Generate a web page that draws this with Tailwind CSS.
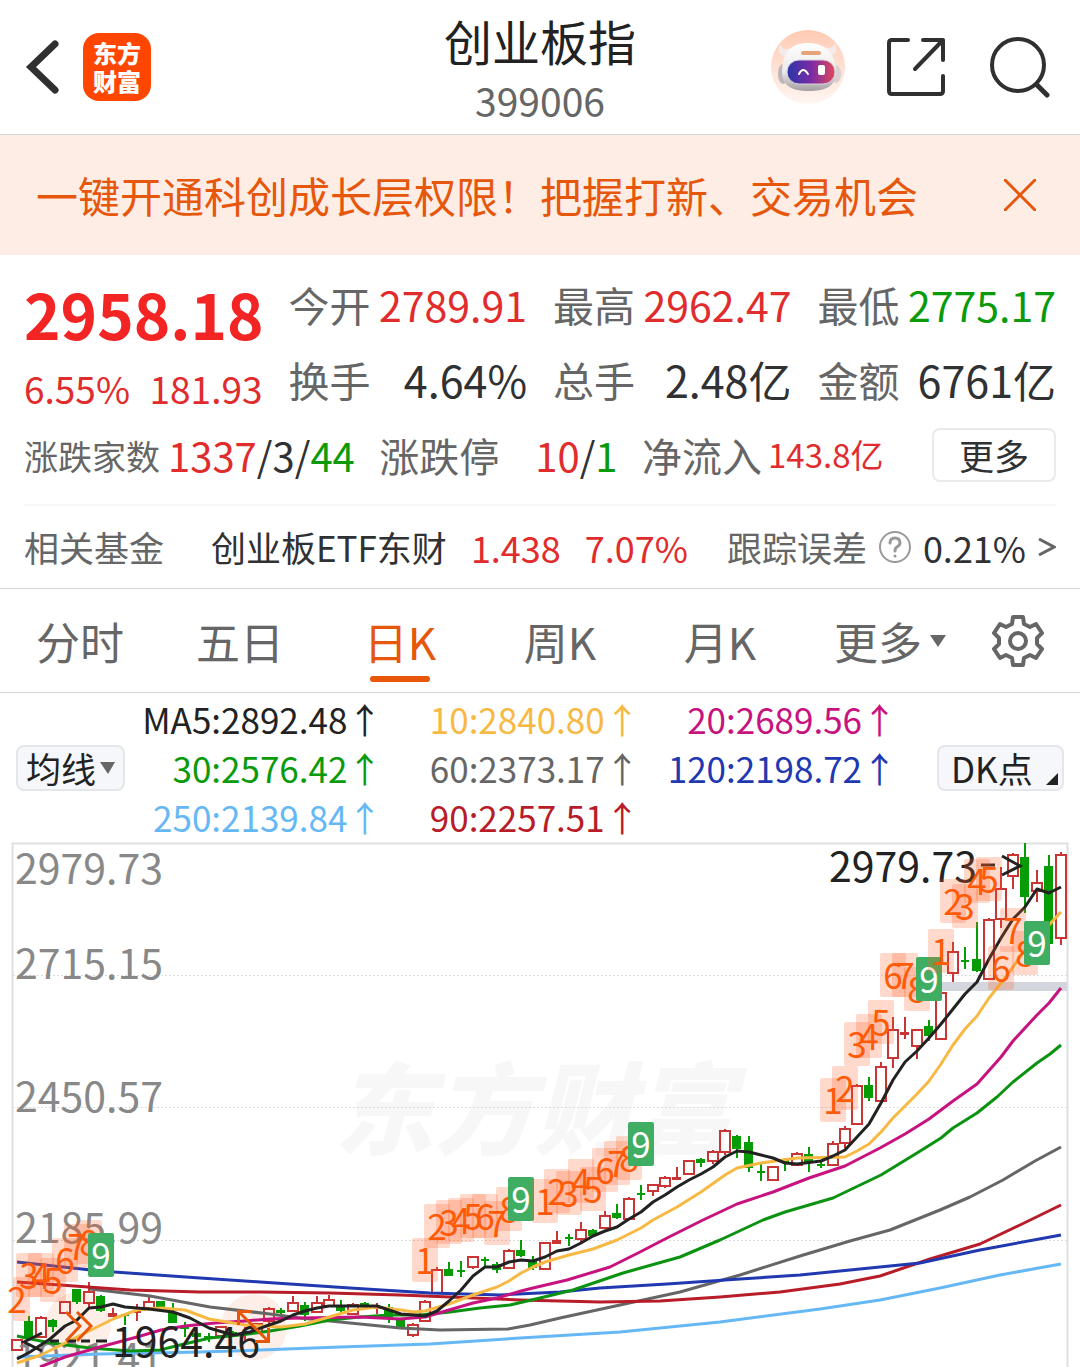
<!DOCTYPE html>
<html lang="zh-CN">
<head>
  <meta charset="UTF-8">
  <meta name="viewport" content="width=device-width, initial-scale=1.0">
  <title>创业板指 399006</title>
  <script src="https://cdn.jsdelivr.net/npm/@tailwindcss/browser@4"></script>
</head>
<body class="bg-white text-[#303133] font-['Noto_Sans_CJK_SC',sans-serif] overflow-x-hidden">

<!-- Header -->
<header class="grid grid-cols-[1fr_auto_1fr] items-center h-[135px] px-6 border-b border-[#d8d8d8]">
  <div class="flex items-center gap-6">
    <button type="button" aria-label="返回">
      <svg class="block w-9 h-14" viewBox="0 0 36 56" fill="none" stroke="#303030" stroke-width="7" stroke-linecap="round" stroke-linejoin="round">
        <path d="M31 5L7 28L31 51" stroke-linejoin="miter"/>
      </svg>
    </button>
    <a href="#" class="flex flex-col items-center justify-center size-17 rounded-2xl bg-[#ff4600] text-white font-black text-2xl leading-7 -ml-px">
      <span>东方</span>
      <span>财富</span>
    </a>
  </div>
  <div class="pt-1 text-center">
    <h1 class="text-[48px] leading-[58px] text-[#222]">创业板指</h1>
    <p class="mt-1 text-[39px] leading-[54px] text-[#666]">399006</p>
  </div>
  <div class="flex items-center justify-end gap-10 pr-[6px]">
    <button type="button" aria-label="智能助手">
      <svg class="block size-[75px]" viewBox="0 0 75 75">
        <defs>
          <linearGradient id="halo" x1="0" y1="0" x2="0" y2="1">
            <stop offset="0" stop-color="#ffcab3"/><stop offset="1" stop-color="#fff6f2"/>
          </linearGradient>
          <linearGradient id="visor" x1="0" y1="0" x2="1" y2="0">
            <stop offset="0" stop-color="#2b35a8"/><stop offset=".5" stop-color="#7a2ba6"/><stop offset="1" stop-color="#e0485c"/>
          </linearGradient>
          <linearGradient id="helmet" x1="0" y1="0" x2="0" y2="1">
            <stop offset="0" stop-color="#fff"/><stop offset=".6" stop-color="#ece8e9"/><stop offset="1" stop-color="#a39da0"/>
          </linearGradient>
        </defs>
        <circle cx="37" cy="37" r="37" fill="url(#halo)"/>
        <path d="M17 27C9 27 6 21 9 14C11 19 15 20 21 18ZM56 26C65 27 67 20 64 13C62 18 58 19 53 17Z" fill="#f3eaea"/>
        <ellipse cx="12" cy="44" rx="5" ry="10" fill="#bdb5b8"/>
        <ellipse cx="65" cy="44" rx="5" ry="9" fill="#d8d0d2"/>
        <path d="M11 42C11 22 20 13 37 13C54 13 65 23 65 43C65 56 54 61 38 61C21 61 11 56 11 42Z" fill="url(#helmet)"/>
        <rect x="30" y="21" width="20" height="4" rx="2" fill="#e5a478"/>
        <rect x="16" y="30" width="48" height="24" rx="12" fill="url(#visor)" stroke="#d8d0dc"/>
        <path d="M28 44Q32 36 37 44" fill="none" stroke="#fff" stroke-width="2" stroke-linecap="round"/>
        <rect x="47" y="35" width="7" height="10" rx="2" fill="#fff"/>
      </svg>
    </button>
    <button type="button" aria-label="分享">
      <svg class="block size-15" viewBox="0 0 60 60" fill="none" stroke="#303030" stroke-width="4" stroke-linecap="round" stroke-linejoin="round">
        <path d="M22 3H6Q3 3 3 6V54Q3 57 6 57H54Q57 57 57 54V39M37 3H57V23M57 3L29 32"/>
      </svg>
    </button>
    <button type="button" aria-label="搜索">
      <svg class="block size-16" viewBox="0 0 64 64" fill="none" stroke="#303030" stroke-width="4" stroke-linecap="round">
        <circle cx="32" cy="30" r="26"/>
        <path d="M51 50L61 60" stroke-width="5"/>
      </svg>
    </button>
  </div>
</header>

<!-- Promo banner -->
<div class="flex items-center justify-between h-30 pl-9 pr-11 bg-[#fdede4] text-[#e6570c]">
  <a href="#" class="text-[42px] leading-[60px]">一键开通科创成长层权限！把握打新、交易机会</a>
  <button type="button" aria-label="关闭">
    <svg class="block size-8" viewBox="0 0 32 32" fill="none" stroke="currentColor" stroke-width="3" stroke-linecap="round">
      <path d="M1 1L31 31M31 1L1 31"/>
    </svg>
  </button>
</div>

<!-- Quote summary -->
<section class="px-6 pt-3 border-b border-[#d8d8d8]">
  <div class="grid grid-cols-4 gap-x-[26px] text-[41px] leading-[75px]">
    <div class="row-span-2 flex flex-col whitespace-nowrap text-[#e02c2c]">
      <strong class="text-[62px] leading-[92px] text-[#f32424]">2958.18</strong>
      <div class="flex justify-between text-[37px] leading-[58px]"><span>6.55%</span><span>181.93</span></div>
    </div>
    <div class="flex justify-between whitespace-nowrap"><span class="text-[#666]">今开</span><span class="text-[#e02c2c]">2789.91</span></div>
    <div class="flex justify-between whitespace-nowrap"><span class="text-[#666]">最高</span><span class="text-[#e02c2c]">2962.47</span></div>
    <div class="flex justify-between whitespace-nowrap"><span class="text-[#666]">最低</span><span class="text-[#0a9a0a]">2775.17</span></div>
    <div class="flex justify-between whitespace-nowrap"><span class="text-[#666]">换手</span><span class="text-[43px]">4.64%</span></div>
    <div class="flex justify-between whitespace-nowrap"><span class="text-[#666]">总手</span><span class="text-[43px]">2.48亿</span></div>
    <div class="flex justify-between whitespace-nowrap"><span class="text-[#666]">金额</span><span class="text-[43px]">6761亿</span></div>
  </div>

  <div class="flex items-center justify-between h-[89px] pb-[11px] whitespace-nowrap border-b-2 border-[#f6f6f6] text-[40px]">
    <div class="flex items-center gap-2">
      <span class="text-[34px] text-[#666]">涨跌家数</span>
      <span><span class="text-[#e02c2c]">1337</span>/3/<span class="text-[#0a9a0a]">44</span></span>
    </div>
    <div class="flex items-center gap-9">
      <span class="text-[#666]">涨跌停</span>
      <span><span class="text-[#e02c2c]">10</span>/<span class="text-[#0a9a0a]">1</span></span>
    </div>
    <div class="flex items-center gap-[6px] mr-6">
      <span class="text-[#666]">净流入</span>
      <span class="text-[33px] text-[#e02c2c]">143.8亿</span>
    </div>
    <button type="button" class="flex items-center justify-center w-[124px] h-[54px] rounded-lg border-2 border-[#e8eaec] text-[35px] leading-[46px]">更多</button>
  </div>

  <div class="flex items-center justify-between h-[82px] whitespace-nowrap text-[35px]">
    <span class="text-[#666]">相关基金</span>
    <a href="#" class="flex items-center gap-6 pl-2">
      <span>创业板ETF东财</span>
      <span class="text-[36px] text-[#e02c2c]">1.438</span>
      <span class="text-[36px] text-[#e02c2c]">7.07%</span>
    </a>
    <a href="#" class="flex items-center gap-3">
      <span class="text-[#666]">跟踪误差</span>
      <svg class="size-8" viewBox="0 0 32 32" fill="none" stroke="#999" stroke-width="3" stroke-linecap="round">
        <circle cx="16" cy="16" r="15" stroke-width="2"/>
        <path d="M11 12Q11 7 16 7Q21 7 21 12Q21 14 18 16Q16 17 16 20"/>
        <path d="M16 25V25"/>
      </svg>
      <span class="text-[36px]">0.21%</span>
      <svg class="w-[18px] h-5" viewBox="0 0 18 20" fill="none" stroke="#666" stroke-width="3"><path d="M1 2L16 10L1 18"/></svg>
    </a>
  </div>
</section>

<!-- Period tabs -->
<nav class="flex items-center h-[104px] border-b border-[#d8d8d8] text-[44px] leading-[60px] text-[#666]">
  <div class="flex-1 grid grid-cols-6 justify-items-center">
    <button type="button">分时</button>
    <button type="button">五日</button>
    <button type="button" class="relative text-[#e6570c]">日K<span class="absolute left-1/2 -translate-x-1/2 -bottom-[11px] w-15 h-[6px] rounded-full bg-[#e8560a]"></span></button>
    <button type="button">周K</button>
    <button type="button">月K</button>
    <button type="button" class="flex items-center gap-2 pl-5">更多<svg class="w-4 h-3" viewBox="0 0 16 12"><path d="M0 0H16L8 12Z" fill="#666"/></svg></button>
  </div>
  <button type="button" aria-label="设置" class="ml-8 mr-9">
    <svg class="block size-[52px]" viewBox="0 0 52 52" fill="none" stroke="#666" stroke-width="4" stroke-linejoin="round">
      <path d="M21 2H31L32 9L38 12L44 9L50 18L45 23V29L50 34L44 43L38 40L32 43L31 50H21L20 43L14 40L8 43L2 34L7 29V23L2 18L8 9L14 12L20 9Z"/>
      <circle cx="26" cy="26" r="8"/>
    </svg>
  </button>
</nav>

<!-- Moving averages -->
<section class="flex items-center justify-between h-[149px] px-4 text-[#222] text-[35px]">
  <button type="button" class="flex items-center justify-center gap-1 w-[109px] h-[46px] rounded-lg border-2 border-[#e4e6e9] bg-[#f6f7fa] leading-[42px]">均线<svg class="w-[15px] h-3" viewBox="0 0 15 12"><path d="M0 0H15L8 12Z" fill="#666"/></svg></button>
  <div class="flex-1 grid grid-cols-3 mr-10 text-right whitespace-nowrap leading-[49px]">
    <span>MA5:2892.48↑</span>
    <span class="text-[#f8b944]">10:2840.80↑</span>
    <span class="text-[#c7137f]">20:2689.56↑</span>
    <span class="text-[#0a9a0a]">30:2576.42↑</span>
    <span class="text-[#666]">60:2373.17↑</span>
    <span class="text-[#2038b0]">120:2198.72↑</span>
    <span class="text-[#66b8f5]">250:2139.84↑</span>
    <span class="text-[#b81c28]">90:2257.51↑</span>
  </div>
  <button type="button" class="flex items-end justify-between w-[127px] h-[46px] pl-3 pr-1 rounded-lg border-2 border-[#e4e6e9] bg-[#f6f7fa] leading-[42px]">DK点<svg class="size-3 mb-1" viewBox="0 0 12 12"><path d="M12 0V12H0Z" fill="#222"/></svg></button>
</section>

<!-- K-line chart -->
<svg id="chart" class="block w-full" viewBox="0 842 1080 525" font-family="'Noto Sans CJK SC', sans-serif">
  <text x="334" y="1147" font-size="100" font-weight="900" fill="#f7f7f7" font-style="italic">东方财富</text>
  <g stroke="#dcdcdc" stroke-dasharray="2 2">
    <path d="M13 975.5H1067M13 1107.5H1067M13 1240.5H1067"/>
  </g>
  <path d="M12.5 1367V843.5H1067.5V1367" fill="none" stroke="#e0e0e0" stroke-width="2"/>
  <rect x="941" y="982" width="126" height="9" fill="#d3d6dc"/>
  <circle cx="78" cy="1325" r="33" fill="#fdeee8"/>
  <circle cx="254" cy="1327" r="33" fill="#fdeee8"/>
  <g id="candles"></g>
  <g font-size="41" fill="#888">
    <text x="15" y="884">2979.73</text>
    <text x="15" y="979">2715.15</text>
    <text x="15" y="1112">2450.57</text>
    <text x="15" y="1243">2185.99</text>
    <text x="15" y="1373">1921.41</text>
  </g>
  <g fill="none" stroke-width="3" stroke-linejoin="round">
    <polyline stroke="#66b8f5" points="17,1357 100,1354 200,1352 260,1350 340,1347 430,1344 520,1338 620,1332 720,1322 820,1309 880,1300 940,1288 1000,1275 1061,1264"/>
    <polyline stroke="#666" points="90,1289 150,1296 210,1307 270,1314 300,1318 350,1323 400,1328 440,1330 508,1329 530,1325 560,1318 620,1305 680,1292 740,1275 800,1256 850,1241 890,1230 940,1210 970,1197 1003,1180 1035,1161 1061,1147"/>
    <polyline stroke="#b81c28" points="17,1282 60,1285 130,1290 200,1292 260,1292 330,1293 400,1295 450,1297 520,1300 600,1302 660,1301 720,1297 780,1292 840,1284 880,1276 930,1259 980,1244 1020,1225 1061,1205"/>
    <polyline stroke="#2038b0" points="17,1262 100,1271 200,1278 260,1282 350,1288 430,1293 500,1295 560,1292 600,1288 667,1284 740,1279 800,1275 860,1269 920,1263 980,1250 1061,1235"/>
    <polyline stroke="#0a9210" points="17,1336 50,1343 90,1348 130,1351 160,1350 180,1345 210,1338 240,1335 270,1331 300,1326 330,1320 360,1317 390,1315 420,1315 450,1312 480,1308 510,1305 540,1298 573,1290 623,1273 680,1257 720,1240 763,1220 785,1212 833,1198 881,1175 917,1153 941,1138 953,1128 977,1113 997,1097 1013,1082 1037,1063 1050,1054 1061,1045"/>
    <polyline stroke="#c7137f" points="40,1367 65,1357 100,1347 137,1337 161,1330 185,1326 215,1323 245,1321 270,1319 300,1318 360,1317 400,1319 425,1317 449,1310 473,1303 497,1298 521,1291 533,1288 567,1280 610,1267 640,1252 667,1238 703,1220 737,1204 773,1192 809,1178 845,1166 880,1148 905,1134 929,1119 953,1101 977,1084 1001,1057 1013,1041 1037,1015 1049,1003 1061,988"/>
    <polyline stroke="#f8b944" points="17,1363 41,1355 65,1343 89,1331 113,1319 137,1310 161,1308 185,1310 209,1319 245,1325 281,1327 305,1324 329,1317 353,1310 377,1307 401,1310 413,1312 425,1311 449,1304 473,1295 497,1287 509,1281 521,1273 533,1267 545,1262 569,1255 593,1249 617,1240 641,1228 653,1220 677,1207 701,1192 725,1175 737,1168 761,1163 797,1158 845,1157 857,1151 869,1144 881,1132 893,1118 917,1094 929,1081 941,1064 953,1045 965,1029 977,1016 989,998 1001,983 1013,967 1025,950 1037,937 1049,925 1061,912"/>
    <polyline stroke="#222" points="17,1359 30,1352 50,1339 65,1326 77,1320 89,1308 101,1307 113,1304 125,1307 149,1309 173,1312 190,1318 209,1328 233,1335 250,1332 269,1325 281,1321 293,1315 305,1311 317,1308 329,1306 377,1306 389,1310 401,1314 425,1316 437,1311 449,1301 461,1290 473,1276 485,1267 497,1267 509,1262 521,1260 533,1261 545,1257 557,1251 569,1249 581,1243 593,1236 605,1231 617,1227 629,1219 641,1212 653,1202 665,1195 677,1187 689,1180 701,1174 713,1167 725,1157 737,1151 749,1152 761,1155 773,1158 785,1163 797,1164 821,1161 833,1156 845,1150 857,1137 869,1124 881,1103 893,1080 905,1062 917,1051 929,1038 941,1024 953,1009 965,994 977,982 989,959 1001,938 1013,919 1025,907 1037,889 1049,893 1061,887"/>
  </g>
  <!-- high / low callouts -->
  <g font-size="41" fill="#222">
    <text x="829" y="882">2979.73</text>
    <text x="112" y="1357">1964.46</text>
  </g>
  <g fill="none" stroke="#222" stroke-width="3">
    <path d="M981 865H995M1002 856L1020 866L1002 875"/>
    <path d="M42 1333L24 1342L42 1351M50 1341H59M67 1341H76M81 1341H90M96 1341H107"/>
  </g>
  <!-- signal icons -->
  <g fill="none" stroke="#e8560a" stroke-width="3">
    <path d="M66 1312L80 1326L66 1341M77 1312L91 1326L77 1341"/>
    <path d="M252 1311.5H238.500V1325M239 1312L268 1341M268.500 1328V1341.500H255"/>
  </g>
  <g id="badges" font-size="35"></g>
</svg>

<script>
  const RED = '#c93434', GREEN = '#069c06';
  const STEP = 12, FIRST_X = 17;

  // [direction, high, bodyTop, bodyBottom, low], one per trading day
  const candles = [
    [1,1339,1340,1350,1350],[0,1316,1321,1337,1337],[1,1316,1318,1337,1337],[0,1319,1320,1327,1332],
    [1,1301,1302,1313,1313],[0,1289,1289,1302,1304],[1,1282,1292,1303,1309],[0,1295,1296,1311,1312],
    [1,1308,1313,1317,1317],[0,1313,1314,1316,1325],[1,1304,1311,1313,1321],[1,1297,1302,1308,1308],
    [0,1301,1301,1307,1307],[0,1303,1313,1323,1323],[0,1322,1326,1329,1337],[0,1332,1333,1337,1341],
    [0,1333,1336,1339,1342],[1,1326,1327,1336,1336],[0,1331,1332,1335,1337],[1,1327,1332,1335,1340],
    [1,1323,1324,1332,1332],[1,1307,1309,1321,1325],[0,1308,1310,1313,1316],[1,1296,1303,1311,1311],
    [0,1302,1305,1315,1321],[1,1296,1303,1312,1313],[1,1295,1300,1306,1307],[0,1300,1306,1311,1313],
    [1,1303,1305,1314,1315],[0,1302,1303,1307,1307],[1,1303,1307,1309,1314],[0,1304,1307,1318,1323],
    [0,1320,1320,1327,1327],[1,1323,1325,1335,1337],[1,1300,1302,1321,1321],[1,1267,1270,1293,1293],
    [0,1262,1269,1276,1276],[0,1261,1270,1272,1277],[1,1256,1257,1267,1269],[0,1257,1259,1261,1266],
    [0,1262,1264,1270,1273],[1,1249,1251,1268,1268],[0,1240,1250,1256,1257],[0,1256,1261,1268,1270],
    [1,1242,1243,1269,1269],[1,1231,1240,1244,1244],[0,1234,1237,1239,1246],[1,1222,1230,1239,1242],
    [0,1229,1230,1236,1237],[1,1211,1216,1228,1228],[0,1204,1213,1218,1219],[1,1197,1199,1219,1219],
    [0,1185,1193,1195,1200],[1,1184,1185,1191,1196],[1,1176,1178,1186,1188],[1,1167,1177,1180,1180],
    [1,1160,1161,1174,1174],[0,1158,1159,1163,1167],[1,1150,1152,1161,1164],[1,1129,1131,1152,1155],
    [0,1135,1136,1149,1158],[0,1136,1142,1168,1172],[0,1162,1171,1173,1181],[1,1166,1167,1180,1180],
    [0,1158,1160,1162,1171],[1,1152,1154,1165,1165],[0,1147,1154,1163,1172],[0,1161,1164,1166,1168],
    [1,1141,1144,1165,1165],[1,1126,1129,1143,1148],[1,1084,1086,1124,1125],[0,1077,1085,1098,1101],
    [1,1062,1067,1101,1101],[1,1017,1030,1058,1068],[1,1017,1032,1035,1039],[1,1029,1030,1046,1059],
    [0,1020,1026,1036,1041],[1,990,993,1039,1040],[1,942,952,973,982],[0,947,960,962,969],
    [0,922,959,971,972],[1,918,920,979,979],[1,867,889,919,928],[1,853,855,876,889],
    [0,843,857,897,913],[1,870,883,891,902],[0,855,866,944,944],[1,852,855,938,945]
  ];

  // [digit, candle index, box top]
  const badges = [
    [2,0,1277],[3,1,1253],[4,2,1253],[5,3,1258],[6,4,1238],[7,5,1224],[8,6,1220],[9,7,1233],
    [1,34,1238],[2,35,1204],[3,36,1200],[4,37,1198],[5,38,1194],[6,39,1194],[7,40,1201],[8,41,1187],[9,42,1177],
    [1,44,1179],[2,45,1169],[3,46,1171],[4,47,1159],[5,48,1167],[6,49,1148],[7,50,1141],[8,51,1136],[9,52,1122],
    [1,68,1078],[2,69,1066],[3,70,1022],[4,71,1014],[5,72,1000],[6,73,953],[7,74,953],[8,75,967],[9,76,957],
    [1,77,929],[2,78,879],[3,79,884],[4,80,859],[5,81,857],[6,82,946],[7,83,908],[8,84,931],[9,85,921]
  ];

  const xAt = i => FIRST_X + i * STEP;

  document.getElementById('candles').innerHTML = candles.map(([up, high, top, bottom, low], i) => {
    const x = xAt(i), h = bottom - top;
    const color = up ? RED : GREEN;
    const hollow = up && h > 4;
    const wicks = `<path d="M${x} ${high}V${top}M${x} ${bottom}V${low}" stroke="${color}" stroke-width="2"/>`;
    const body = hollow
      ? `<rect x="${x - 5}" y="${top}" width="10" height="${h}" fill="none" stroke="${color}" stroke-width="2"/>`
      : `<rect x="${x - (h > 2 ? 5 : 4)}" y="${top}" width="${h > 2 ? 9 : 8}" height="${h}" fill="${color}"/>`;
    return wicks + body;
  }).join('');

  document.getElementById('badges').innerHTML = badges.map(([n, i, y]) => {
    const x = xAt(i);
    const done = n === 9;
    // the first box is clipped by the left axis
    const left = Math.max(x - 13, 13);
    return `<rect x="${left}" y="${y}" width="${x + 13 - left}" height="44" rx="2" fill="${done ? '#3fae62' : '#ff5a1e'}" fill-opacity="${done ? 1 : 0.23}"/>
      <text x="${x}" y="${y + 36}" text-anchor="middle" fill="${done ? '#fff' : '#ff5a05'}">${n}</text>`;
  }).join('');
</script>
</body>
</html>
